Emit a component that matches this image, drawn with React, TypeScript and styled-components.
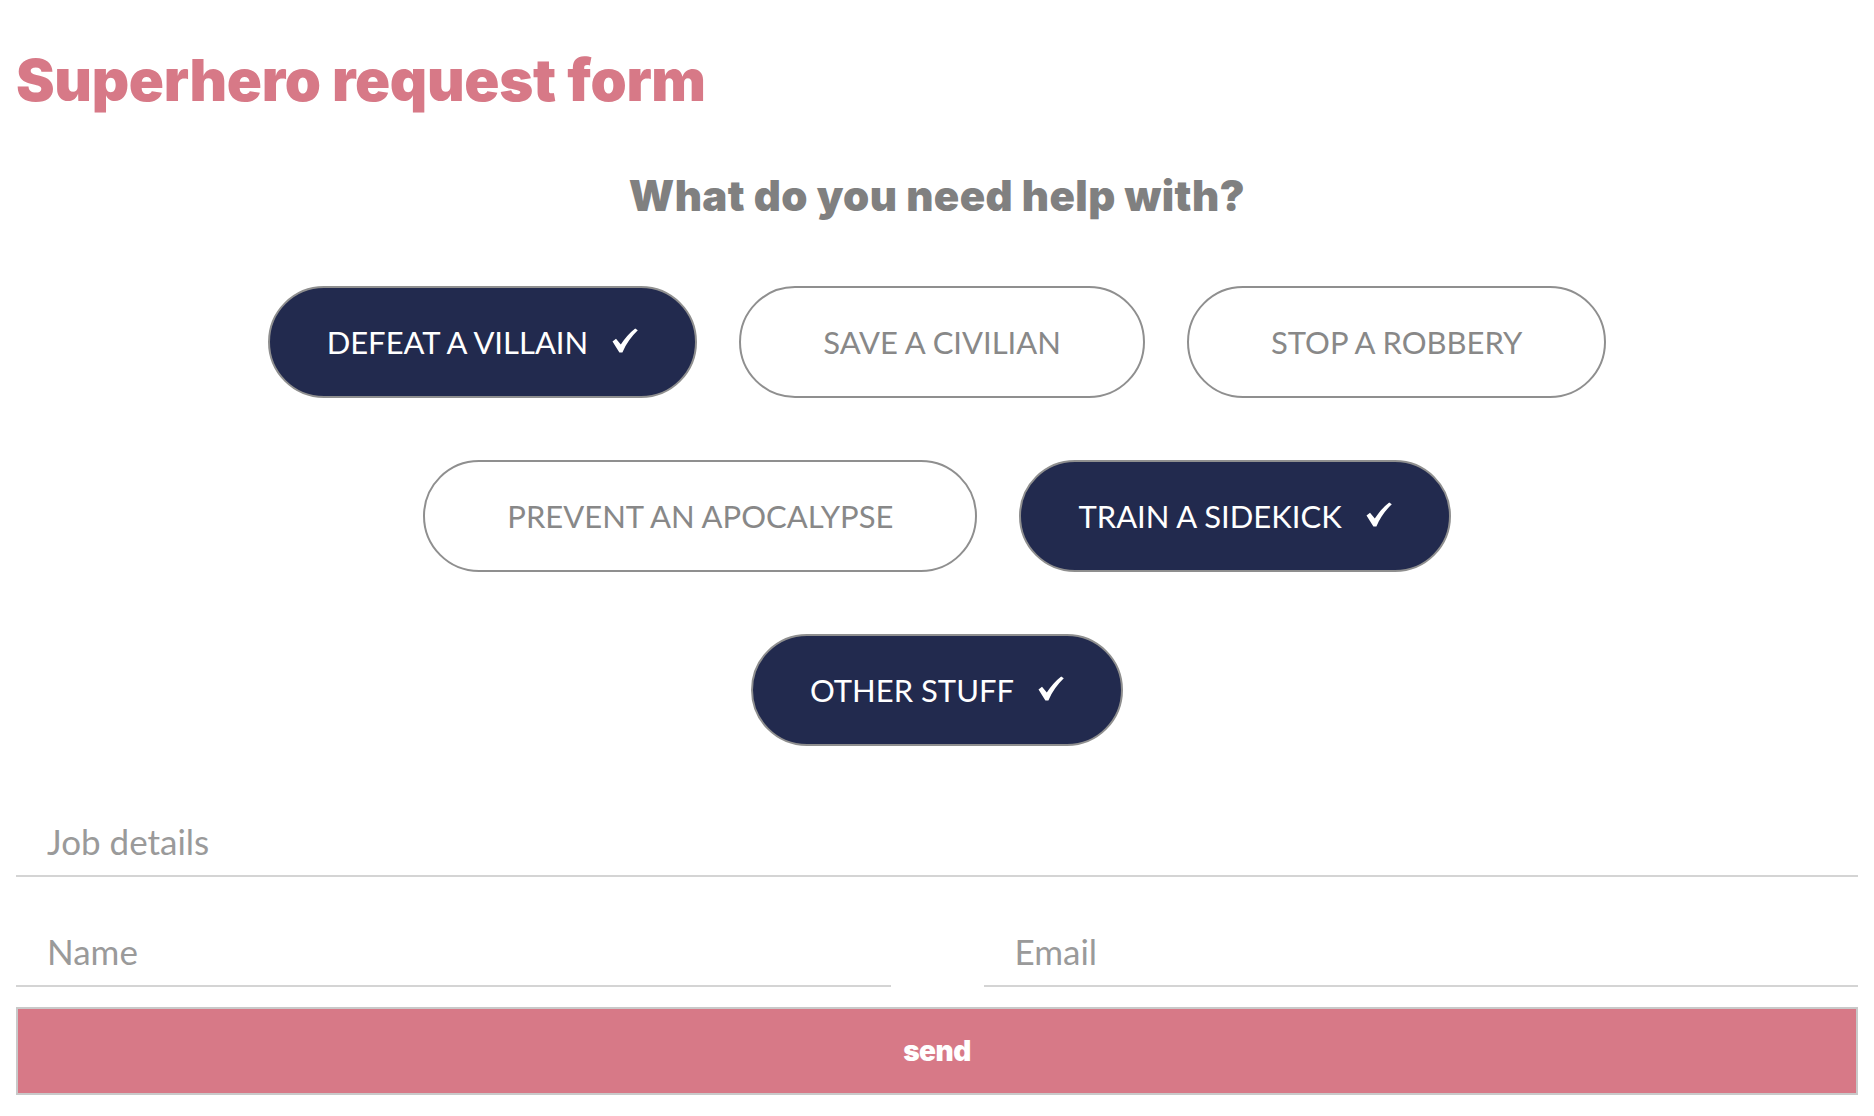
import React, { useState } from "react";
import styled, { createGlobalStyle, css } from "styled-components";

const GlobalStyle = createGlobalStyle`
  html, body { margin: 0; padding: 0; background: #ffffff; }
  body { font-family: Lato, "Open Sans", sans-serif; }
  * { box-sizing: border-box; }
`;

const Page = styled.main`
  padding: 46px 16px 0 16px;
`;

const Title = styled.h1`
  margin: 0;
  font-family: Inter, Roboto, sans-serif;
  font-weight: 900;
  font-size: 58px;
  line-height: 1.2;
  letter-spacing: -0.3px;
  color: #d77987;
`;

const Subtitle = styled.h2`
  margin: 55px 0 0 0;
  text-align: center;
  font-family: Inter, Roboto, sans-serif;
  font-weight: 900;
  font-size: 42px;
  line-height: 1.2;
  letter-spacing: 0.4px;
  color: #808080;
`;

const Choices = styled.div`
  margin-top: 65px;
  display: flex;
  flex-direction: column;
  align-items: center;
  gap: 62px;
`;

const ChoiceRow = styled.div`
  display: flex;
  justify-content: center;
  gap: 42px;
`;

const Pill = styled.button<{ $selected: boolean }>`
  height: 112px;
  border-radius: 56px;
  border: 2px solid #8f8f8f;
  display: inline-flex;
  align-items: center;
  justify-content: center;
  font-family: Lato, sans-serif;
  font-size: 31px;
  font-weight: 400;
  text-transform: uppercase;
  white-space: nowrap;
  cursor: pointer;
  ${({ $selected }) =>
    $selected
      ? css`
          background: #222a4e;
          color: #ffffff;
          padding: 0 57px;
        `
      : css`
          background: #ffffff;
          color: #888888;
          padding: 0 82px;
        `}
`;

const CheckIcon = styled.svg`
  display: block;
  margin-left: 24px;
  width: 26px;
  height: 25px;
  flex: none;
  transform: translateY(-1px);
`;

const Check = () => (
  <CheckIcon viewBox="0 0 26 25" aria-hidden="true">
    <path
      d="M0.5 13.6 L4 10.8 L8.8 16.6 C12.5 10.8 17.5 4.8 23.2 0.4 L25.8 2.2 C19.6 8.2 14.2 15.6 10.4 24.4 L7.4 24.4 Z"
      fill="#ffffff"
    />
  </CheckIcon>
);

const Field = styled.input`
  display: block;
  width: 100%;
  height: 70px;
  padding: 0 31px;
  border: none;
  border-bottom: 2px solid #d4d4d4;
  outline: none;
  font-family: Lato, sans-serif;
  font-size: 35px;
  color: #555;
  background: transparent;
  &::placeholder { color: #9a9a9a; }
`;

const JobField = styled(Field)`
  margin-top: 61px;
`;

const ContactRow = styled.div`
  margin-top: 40px;
  display: grid;
  grid-template-columns: 1fr 1fr;
  column-gap: 93px;
`;

const SendButton = styled.button`
  display: block;
  width: 100%;
  margin-top: 20px;
  height: 88px;
  background: #d77987;
  border: 2px solid #c9c9c9;
  color: #ffffff;
  font-family: Inter, Roboto, sans-serif;
  font-weight: 900;
  font-size: 28px;
  letter-spacing: -0.5px;
  cursor: pointer;
`;

const rows: string[][] = [
  ["Defeat a villain", "Save a civilian", "Stop a robbery"],
  ["Prevent an apocalypse", "Train a sidekick"],
  ["Other stuff"],
];

export default function App() {
  const [selected, setSelected] = useState<Record<string, boolean>>({
    "Defeat a villain": true,
    "Train a sidekick": true,
    "Other stuff": true,
  });

  const toggle = (k: string) => setSelected((s) => ({ ...s, [k]: !s[k] }));

  return (
    <>
      <GlobalStyle />
      <Page>
        <Title>Superhero request form</Title>
        <Subtitle>What do you need help with?</Subtitle>
        <Choices>
          {rows.map((row, i) => (
            <ChoiceRow key={i}>
              {row.map((label) => (
                <Pill key={label} $selected={!!selected[label]} onClick={() => toggle(label)}>
                  {label}
                  {selected[label] && <Check />}
                </Pill>
              ))}
            </ChoiceRow>
          ))}
        </Choices>
        <JobField placeholder="Job details" />
        <ContactRow>
          <Field placeholder="Name" />
          <Field placeholder="Email" />
        </ContactRow>
        <SendButton>send</SendButton>
      </Page>
    </>
  );
}
